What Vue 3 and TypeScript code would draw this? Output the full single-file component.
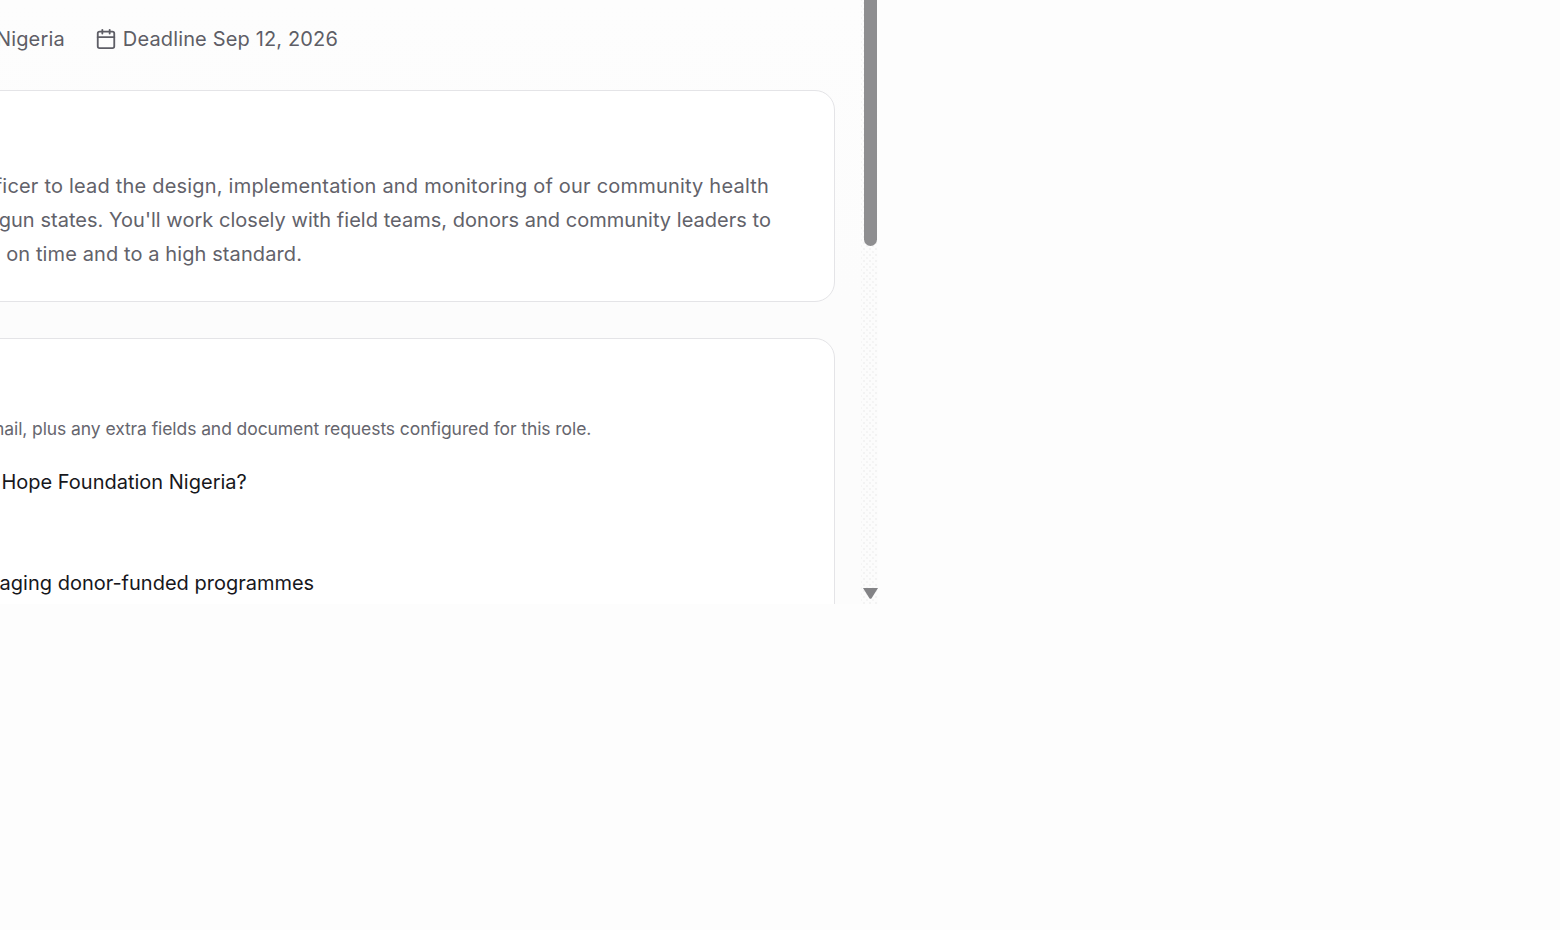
<script setup lang="ts">
const summary: string[] = [
  "We seek a Programme Officer to lead the design, implementation and monitoring of our community health",
  "programmes in Lagos and Ogun states. You'll work closely with field teams, donors and community leaders to",
  "ensure projects are delivered on time and to a high standard.",
];
</script>

<template>
  <div class="page">
    <main class="pane">
      <div class="content">
        <div class="meta">
          <span class="meta-item">Lagos, Nigeria</span>
          <span class="meta-item">
            <svg class="cal" viewBox="0 0 24 24" fill="none" stroke="currentColor" stroke-width="2" stroke-linecap="round" stroke-linejoin="round">
              <path d="M8 2v4" />
              <path d="M16 2v4" />
              <rect x="3" y="4" width="18" height="18" rx="2" />
              <path d="M3 10h18" />
            </svg>
            Deadline Sep 12, 2026
          </span>
        </div>
        <section class="card card-about">
          <h2 class="card-title">About the role</h2>
          <p class="summary">
            <span v-for="(line, i) in summary" :key="i" class="line" :class="`line-${i + 1}`">{{ line }}</span>
          </p>
        </section>
        <section class="card card-apply">
          <h2 class="card-title">Apply</h2>
          <p class="note">You need to give your name and email, plus any extra fields and document requests configured for this role.</p>
          <div class="question">Why do you want to work with Hope Foundation Nigeria?</div>
          <div class="question q2">Describe your experience managing donor-funded programmes</div>
        </section>
      </div>
      <div class="track">
        <div class="thumb"></div>
        <svg class="arrow" viewBox="0 0 15 11">
          <path d="M0 0H15L8.6 10.2Q7.5 11.4 6.4 10.2Z" />
        </svg>
      </div>
    </main>
  </div>
</template>

<style scoped>
.page {
  height: 930px;
  background: #fdfdfd;
  overflow: hidden;
  font-family: Inter, "Liberation Sans", sans-serif;
}
.pane {
  position: relative;
  width: 878px;
  height: 604px;
  overflow: hidden;
  background: linear-gradient(#fdfdfd, #fcfcfc 300px);
}
.content {
  width: 1165px;
  margin-left: -330px;
  display: flex;
  flex-direction: column;
}
.meta {
  height: 90px;
  box-sizing: border-box;
  padding-top: 26px;
  padding-right: 497px;
  display: flex;
  justify-content: flex-end;
  align-items: flex-start;
  gap: 30px;
  font-size: 20px;
  line-height: 26px;
  letter-spacing: 0.15px;
  color: #5e5e66;
}
.meta-item {
  display: flex;
  align-items: center;
  gap: 6px;
  white-space: nowrap;
}
.cal {
  width: 22px;
  height: 22px;
}
.card {
  box-sizing: border-box;
  background: #fff;
  border: 1px solid #e4e4e7;
  border-radius: 20px;
}
.card-about {
  height: 212px;
  padding: 28px 63px 0 39px;
}
.card-apply {
  margin-top: 36px;
  height: 400px;
  padding: 28px 63px 0 39px;
}
.card-title {
  margin: 0;
  height: 50px;
  font-size: 22px;
  color: #17171c;
  font-weight: 600;
}
.summary {
  margin: 0;
  font-size: 20px;
  line-height: 34px;
  color: #62626a;
}
.line {
  display: block;
  text-align: right;
  white-space: nowrap;
}
.line-1 {
  letter-spacing: 0.2px;
  margin-right: 2px;
}
.line-2 {
  letter-spacing: 0.03px;
}
.line-3 {
  letter-spacing: 0.1px;
  margin-right: 469px;
}
.note {
  margin: -1px 0 26px;
  font-size: 17.5px;
  line-height: 26px;
  letter-spacing: -0.085px;
  color: #66666e;
  white-space: nowrap;
}
.question {
  font-size: 20px;
  line-height: 28px;
  color: #17171c;
  white-space: nowrap;
}
.q2 {
  margin-top: 73px;
}
.track {
  position: absolute;
  top: 0;
  right: 0;
  bottom: 0;
  width: 17px;
  background-image:
    radial-gradient(circle, #eeeeee 0.6px, transparent 0.9px),
    radial-gradient(circle, #f0f0f0 0.6px, transparent 0.9px);
  background-size: 6px 6px;
  background-position: 0 0, 3px 3px;
}
.thumb {
  position: absolute;
  top: -10px;
  left: 3px;
  width: 13px;
  height: 256px;
  border-radius: 0 0 7px 7px;
  background: #8e8e90;
}
.arrow {
  position: absolute;
  left: 2px;
  top: 588px;
  width: 15px;
  height: 11px;
  fill: #838386;
}
</style>
